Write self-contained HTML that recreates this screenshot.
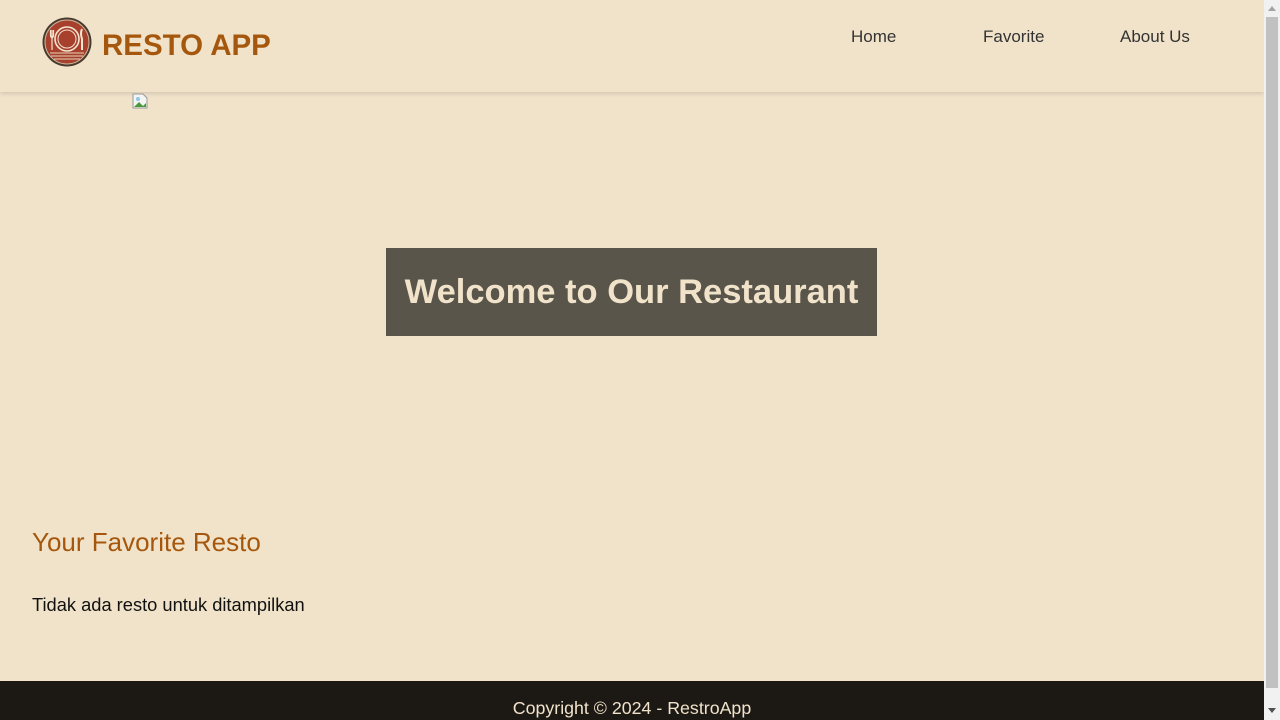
<!DOCTYPE html>
<html><head><meta charset="utf-8">
<style>
*{margin:0;padding:0;box-sizing:border-box}
html,body{width:1280px;height:720px;overflow:hidden;background:#f1e3ca;font-family:"Liberation Sans",sans-serif}
#main{position:absolute;left:0;top:0;width:1264px;height:720px;background:#f1e3ca}
header{position:absolute;left:0;top:0;width:1264px;height:92px;background:#f1e3ca;box-shadow:0 2px 4px rgba(0,0,0,.12)}
.logo{position:absolute;left:42px;top:17px}
.brand{position:absolute;left:102px;top:29px;font-size:29.5px;font-weight:bold;color:#a5580d}
nav a{position:absolute;top:27px;font-size:17px;color:#333;text-decoration:none}
.hero{position:absolute;left:386px;top:248px;width:491px;height:88px;background:#5a554b;color:#f1e3ca;font-size:34.5px;font-weight:bold;text-align:center;line-height:88px}
h2{position:absolute;left:32px;top:527px;font-size:26px;font-weight:normal;color:#a5580d}
p{position:absolute;left:32px;top:594px;font-size:18.3px;color:#111}
footer{position:absolute;left:0;top:681px;width:1264px;height:39px;background:#1c1915;color:#f1e3ca;text-align:center;font-size:17.8px;padding-top:17px}
.sb{position:absolute;left:1264px;top:0;width:16px;height:720px;background:#f1f1f1}
.thumb{position:absolute;left:1266px;top:17px;width:12px;height:671px;background:#c1c1c1}
</style></head><body>
<div id="main">
<header>
<svg class="logo" width="50" height="50" viewBox="0 0 50 50">
<circle cx="25" cy="25" r="24.5" fill="#4a3a2e"/>
<circle cx="25" cy="25" r="22" fill="#a8402e"/>
<circle cx="25" cy="25" r="22" fill="none" stroke="#c9b69a" stroke-width="1"/>
<circle cx="25" cy="22" r="12" fill="none" stroke="#f3e6d0" stroke-width="1.6"/>
<circle cx="25" cy="22" r="9" fill="none" stroke="#f3e6d0" stroke-width="1"/>
<path d="M10 13v8M8.5 13v5q0 2 1.5 3M11.5 13v5q0 2-1.5 3M10 21v12" stroke="#f3e6d0" stroke-width="1.2" fill="none"/>
<path d="M40 12q-2 4 0 10v11" stroke="#f3e6d0" stroke-width="2" fill="none"/>
<path d="M8 36h34M9 39h32M12 42h26" stroke="#e6d3b5" stroke-width="1"/>
</svg>
<div class="brand">RESTO APP</div>
<nav><a style="left:851px">Home</a><a style="left:983px">Favorite</a><a style="left:1120px">About Us</a></nav>
</header>
<svg style="position:absolute;left:132px;top:93px" width="16" height="16" viewBox="0 0 16 16"><path d="M1 1h10l4 4v10H1z" fill="#f4f4f4" stroke="#999"/><path d="M2 14l5-5 4 4 3-3v4z" fill="#4a9a3a"/><circle cx="6" cy="6" r="2" fill="#8cc8ea"/></svg>
<div class="hero">Welcome to Our Restaurant</div>
<h2>Your Favorite Resto</h2>
<p>Tidak ada resto untuk ditampilkan</p>
<footer>Copyright © 2024 - RestroApp</footer>
</div>
<div class="sb"></div><div class="thumb"></div>
<svg style="position:absolute;left:1267px;top:4px" width="10" height="8"><path d="M1 7L5 2L9 7z" fill="#a3a3a3"/></svg>
<svg style="position:absolute;left:1267px;top:707px" width="10" height="8"><path d="M1 1L5 6L9 1z" fill="#505050"/></svg>
</body></html>
